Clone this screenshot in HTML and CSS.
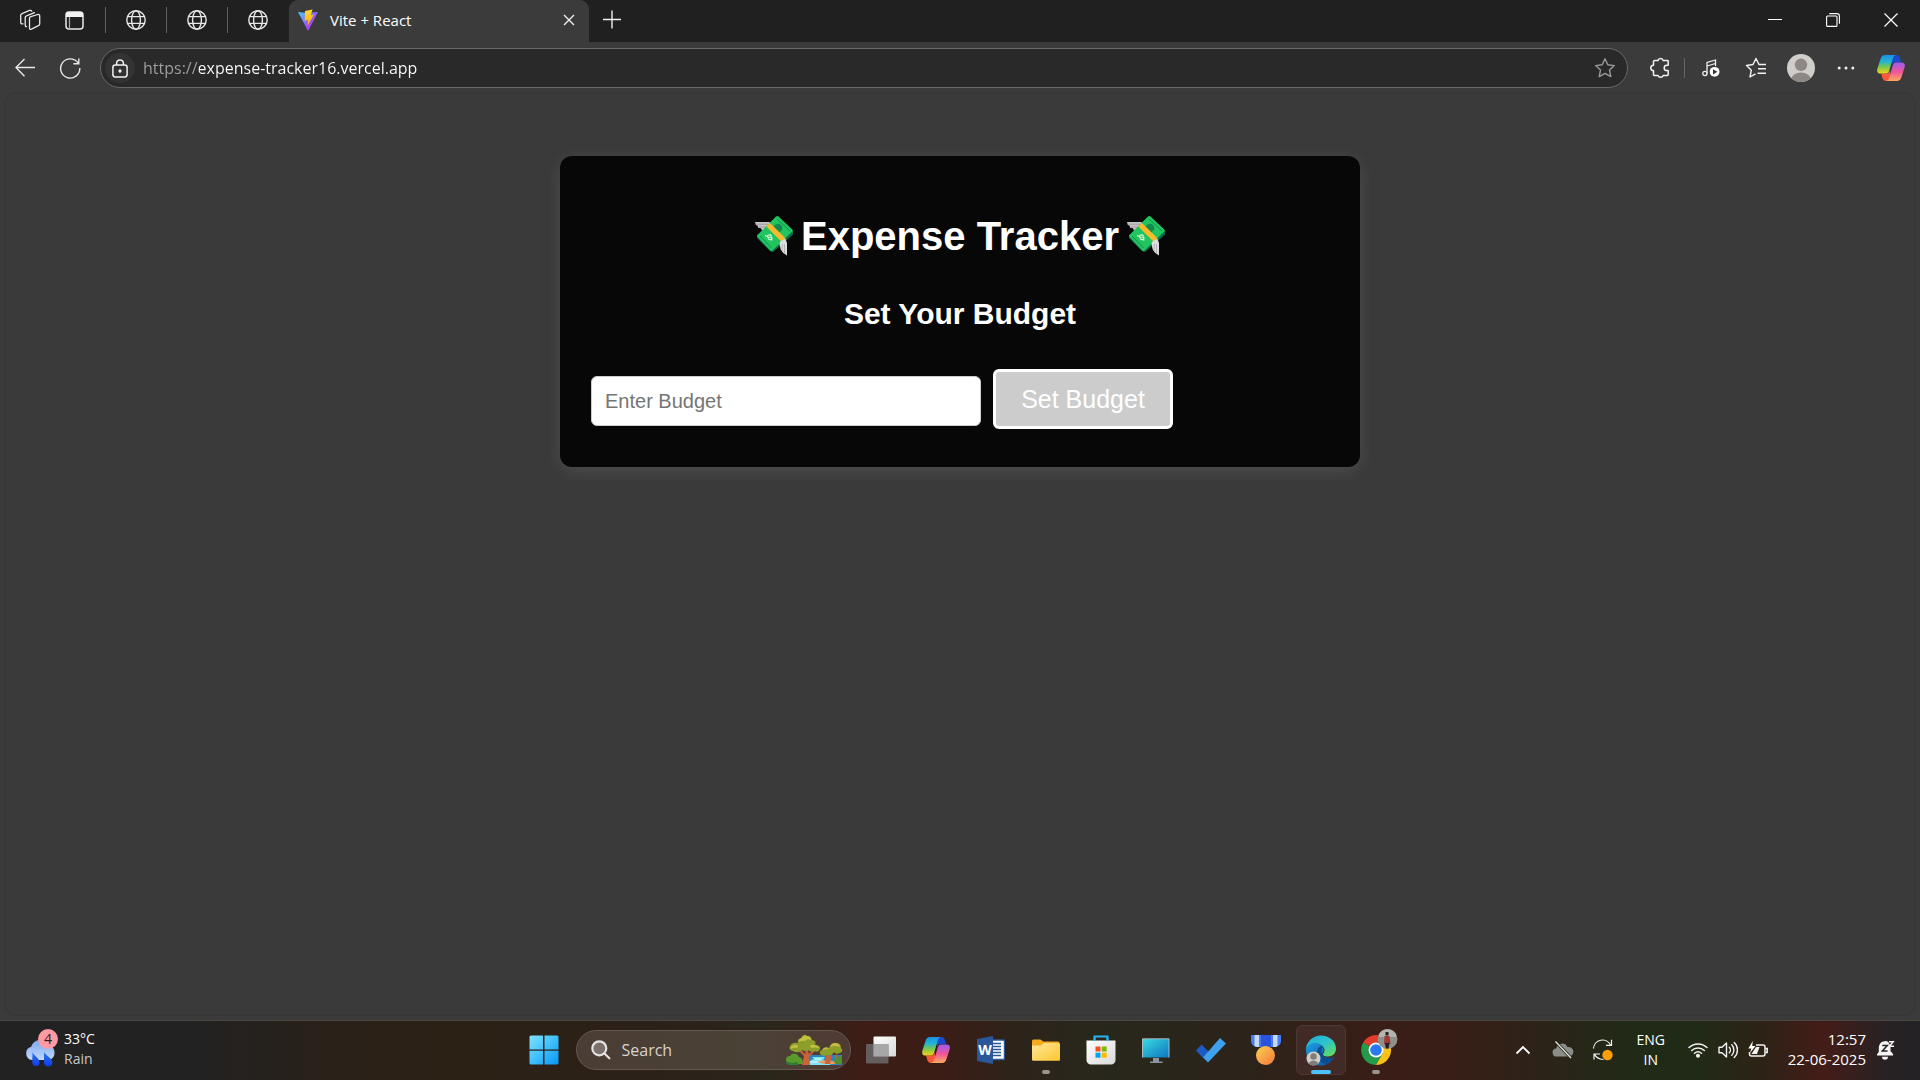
FILE: index.html
```html
<!DOCTYPE html>
<html lang="en">
<head>
<meta charset="utf-8">
<meta name="viewport" content="width=device-width, initial-scale=1">
<title>Vite + React</title>
<link rel="stylesheet" href="styles.css">
</head>
<body>
<!-- Shared gradients and reusable symbols -->
<svg class="defs" aria-hidden="true">
  <defs>
    <linearGradient id="vite-a" x1="0" y1="0" x2="1" y2="1"><stop offset="0" stop-color="#41d1ff"/><stop offset=".6" stop-color="#a34bfa"/><stop offset="1" stop-color="#bd34fe"/></linearGradient>
    <linearGradient id="vite-b" x1="0" y1="0" x2="0" y2="1"><stop offset="0" stop-color="#ffdd35"/><stop offset="1" stop-color="#ffa800"/></linearGradient>
    <linearGradient id="cop-a" x1="0" y1="0" x2="0" y2="1"><stop offset="0" stop-color="#1b8fe8"/><stop offset=".35" stop-color="#21b5d4"/><stop offset=".65" stop-color="#7cc84a"/><stop offset="1" stop-color="#f2d21c"/></linearGradient>
    <linearGradient id="cop-b" x1="0" y1="0" x2="0" y2="1"><stop offset="0" stop-color="#9a5cf2"/><stop offset=".5" stop-color="#ee5599"/><stop offset="1" stop-color="#ffa95c"/></linearGradient>
    <linearGradient id="win" x1="0" y1="0" x2="1" y2="1"><stop offset="0" stop-color="#83e1fd"/><stop offset=".5" stop-color="#3fc0fb"/><stop offset="1" stop-color="#0a93f8"/></linearGradient>
    <linearGradient id="fold" x1="0" y1="0" x2="1" y2="1"><stop offset="0" stop-color="#ffe79b"/><stop offset="1" stop-color="#fdc62f"/></linearGradient>
    <linearGradient id="screen" x1="0" y1="0" x2="1" y2="1"><stop offset="0" stop-color="#38dbe4"/><stop offset="1" stop-color="#0e74be"/></linearGradient>
    <linearGradient id="cloud" x1="0" y1="0" x2="0" y2="1"><stop offset="0" stop-color="#7aa9f0"/><stop offset="1" stop-color="#c3d9fb"/></linearGradient>
    <linearGradient id="drop" x1="0" y1="0" x2="0" y2="1"><stop offset="0" stop-color="#2a7de8"/><stop offset="1" stop-color="#1338f0"/></linearGradient>
    <linearGradient id="edge-a" x1="0" y1="0" x2="1" y2="1"><stop offset="0" stop-color="#25a9e0"/><stop offset=".5" stop-color="#2cc5c8"/><stop offset="1" stop-color="#6de04b"/></linearGradient>
    <linearGradient id="edge-b" x1="0" y1="0" x2="1" y2="1"><stop offset="0" stop-color="#1b9de2"/><stop offset="1" stop-color="#0c4f9e"/></linearGradient>
    <linearGradient id="medal" x1="0" y1="0" x2="1" y2="1"><stop offset="0" stop-color="#ffd04e"/><stop offset="1" stop-color="#f2793d"/></linearGradient>
    <linearGradient id="panes" x1="0" y1="0" x2="1" y2="1"><stop offset="0" stop-color="#ffffff"/><stop offset="1" stop-color="#d8d8d8"/></linearGradient>
    <symbol id="globe" viewBox="0 0 20 20"><g fill="none" stroke="#e8e8e8" stroke-width="1.4"><circle cx="10" cy="10" r="9.2"/><ellipse cx="10" cy="10" rx="4.4" ry="9.2"/><path d="M1.6 6.6h16.8M1.6 13.4h16.8"/></g></symbol>
    <symbol id="copilot" viewBox="0 0 28 26">
      <path d="M15 0h4.500c2 0 2.800 1.200 3.400 3l1.300 4h-5.500c-1.800 0-3.200 1.400-3.700 3z" fill="#1b49c9"/>
      <path d="M13 26H9c-2.200 0-3.200-1.500-3.800-3.500L4 18.500h5.300c2 0 3-1.300 3.700-3.500z" fill="#f4593a"/>
      <path d="M8 0h11.500c-2 0-3 1.300-3.700 3.500l-3.600 12c-.6 2-1.500 3-3.500 3H3.500C.7 18.500-.3 16.700.3 14L3.500 4C4.300 1.300 5.700 0 8 0z" fill="url(#cop-a)"/>
      <path d="M20 26H8.500c2 0 3-1.300 3.700-3.500l3.600-12c.6-2 1.500-3 3.500-3h5.200c2.800 0 3.800 1.800 3.200 4.500l-3.200 10c-.8 2.700-2.200 4-4.500 4z" fill="url(#cop-b)"/>
    </symbol>
    <symbol id="money" viewBox="0 0 38 40">
      <path d="M0 6h15l-3 8-5 .6-1-2.300-3-.5-.3-2L.8 9z" fill="#c9c5ca"/><path d="M1 8.200h12M4 11h8" stroke="#8f8b91" stroke-width=".7"/>
      <path d="M38 14.500v4L18 36l-3-1L2 22v-3z" fill="#0d6c49"/>
      <path d="M21 .6a1.800 1.800 0 0 1 2.500 0L37.300 13.500a1.500 1.500 0 0 1 0 2L17.500 34.600a1.600 1.600 0 0 1-2.300 0L2.600 21a1.500 1.500 0 0 1 0-2.200z" fill="#20c55f"/>
      <path d="M22.200 3.200 35 15M5 20l11.500 12" stroke="#12904b" fill="none"/>
      <circle cx="23" cy="12" r="4.300" fill="#138a4b"/>
      <path d="M16.600 20.200c-1.500-2.100-4.500-1.200-4 .6.500 1.700 3.800-.8 4.400 1 .4 1.700-2.500 2.800-4.200.6m-2.700-3.200 1.600 1.300m3.900 2.500 1.700 1.400" stroke="#dcf6d8" stroke-width="1.200" fill="none"/>
      <path d="m11.300 10.500 3.600-3.600 15.300 15-3.900 3.700z" fill="#fcb92c"/>
      <path d="M24.500 28c0-2.800 2.500-3.600 5.800-5.600L32 27v12.500l-4-2.800-2.300-3.200z" fill="#dedbe0"/><path d="M27.200 28v7M29.500 28v9" stroke="#a9a5ab" stroke-width=".8"/>
    </symbol>
  </defs>
</svg>

<header class="browser">
  <div class="tabstrip">
    <button class="icon-btn" aria-label="Workspaces"><svg width="22" height="22" viewBox="0 0 22 22" fill="none" stroke="#e8e8e8" stroke-width="1.300" stroke-linejoin="round" stroke-linecap="round"><path d="M10.500 9.200a2 2 0 0 1 1.300-1.500l7-2.200q1.900-.3 1.900 1.300v8.200a2 2 0 0 1-1.300 1.700l-6.900 3.500q-2 .6-2-1.300zM7.600 17.600q-1.400.1-1.400-1.500V8.300a2 2 0 0 1 1.300-1.500l8-3.100M4 14.800q-2.300.4-2.300-1.300V6.200A2 2 0 0 1 3 4.600l7.500-3.200q1.800-.4 2.300.8"/></svg></button>
    <button class="icon-btn" aria-label="Tab actions"><svg width="19" height="19" viewBox="0 0 19 19"><rect x="1" y="1" width="17" height="17" rx="3" fill="none" stroke="#e8e8e8" stroke-width="1.500"/><path d="M1 6V4a3 3 0 0 1 3-3h11a3 3 0 0 1 3 3v2z" fill="#f2f2f2"/><path d="M4.500 6v12" stroke="#aaa" stroke-width="1.200"/></svg></button>
    <button class="pinned" aria-label="Pinned tab 1"><svg width="20" height="20"><use href="#globe"/></svg></button>
    <button class="pinned" aria-label="Pinned tab 2"><svg width="20" height="20"><use href="#globe"/></svg></button>
    <button class="pinned" aria-label="Pinned tab 3"><svg width="20" height="20"><use href="#globe"/></svg></button>
    <div class="tab">
      <svg width="20" height="22" viewBox="0 0 20 22"><path d="M0 3 8.500 4l11.500-1L10 22z" fill="url(#vite-a)"/><path d="m7 2 7.500-1.500-1.800 5.800 3-.6L9.500 17l.6-6-3.400.8z" fill="url(#vite-b)"/></svg>
      <span class="tab-title">Vite + React</span>
      <button class="icon-btn tab-close" aria-label="Close tab"><svg width="12" height="12" viewBox="0 0 12 12" stroke="#eee" stroke-width="1.400"><path d="m1 1 10 10M11 1 1 11"/></svg></button>
    </div>
    <button class="icon-btn new-tab" aria-label="New tab"><svg width="18" height="20" viewBox="0 0 18 20" stroke="#eee" stroke-width="1.400"><path d="M0 9.500h18M9 .5v18"/></svg></button>
    <div class="window-controls">
      <button class="icon-btn" aria-label="Minimize"><svg width="14" height="14" viewBox="0 0 14 14" stroke="#fff"><path d="M0 6.500h14"/></svg></button>
      <button class="icon-btn" aria-label="Restore"><svg width="14" height="14" viewBox="0 0 14 14" fill="none" stroke="#fff" stroke-width="1.100"><rect x=".6" y="3" width="10.400" height="10.400" rx="1"/><path d="M3.300.6H11a2.400 2.400 0 0 1 2.400 2.400v7.700"/></svg></button>
      <button class="icon-btn" aria-label="Close"><svg width="14" height="14" viewBox="0 0 14 14" stroke="#fff" stroke-width="1.200"><path d="m.5.5 13 13M13.500.5l-13 13"/></svg></button>
    </div>
  </div>

  <div class="toolbar">
    <button class="icon-btn" aria-label="Back"><svg width="22" height="20" viewBox="0 0 22 20" fill="none" stroke="#e8e8e8" stroke-width="1.400"><path d="M21 9.500H2M10.500 1 2 9.500l8.500 8.800"/></svg></button>
    <button class="icon-btn" aria-label="Refresh"><svg width="22" height="22" viewBox="0 0 22 22" fill="none" stroke="#e8e8e8" stroke-width="1.400"><path d="M19.500 6.600A9.600 9.600 0 1 0 20.800 11M19.800 1.500v5.200h-5.400"/></svg></button>
    <div class="address">
      <button class="site-info" aria-label="Site information"><svg width="16" height="19" viewBox="0 0 16 19" fill="none" stroke="#f2f2f2" stroke-width="1.500"><rect x=".9" y="5.900" width="14.200" height="12" rx="2.400"/><path d="M4.600 6V4.300a3.400 3.400 0 0 1 6.800 0V6"/><circle cx="8" cy="12" r=".9" fill="#fff"/></svg></button>
      <input class="url" type="text" aria-label="Address" value="https://expense-tracker16.vercel.app">
      <button class="icon-btn" aria-label="Add to favorites"><svg width="22" height="22" viewBox="0 0 22 22" fill="none" stroke="#9a9a9a" stroke-width="1.400" stroke-linejoin="round"><path d="m11 1.800 2.800 6 6.500.8-4.800 4.500 1.300 6.500-5.800-3.200-5.800 3.200 1.300-6.500L1.700 8.600l6.500-.8z"/></svg></button>
    </div>
    <div class="tools">
      <button class="icon-btn" aria-label="Extensions"><svg width="20" height="22" viewBox="0 0 20 22" fill="none" stroke="#f2f2f2" stroke-width="1.500" stroke-linejoin="round"><path d="M4.500 3.500H8a2.700 2.700 0 0 1 5.200 0h4.300q.7 0 .7.700v4h-1.300a2.600 2.600 0 0 0 0 5.400h1.300v4q0 .8-.8.800h-4.200a2.700 2.700 0 0 1-5.200 0H4.300q-.8 0-.8-.8v-4a2.700 2.700 0 0 1 0-5.400V4.500q0-1 1-1z"/></svg></button>
      <span class="divider"></span>
      <button class="icon-btn" aria-label="Media"><svg width="18" height="20" viewBox="0 0 18 20" fill="none" stroke="#f2f2f2" stroke-width="1.300"><circle cx="2.900" cy="15.500" r="2.100"/><path d="M5 15.500V4.500L13.500 2v6M5 8l8.500-2.500"/><circle cx="12.600" cy="13.800" r="4.900" fill="#fff" stroke="none"/><path d="m11 11.200 4.300 2.600-4.300 2.600z" fill="#333" stroke="none"/></svg></button>
      <button class="icon-btn" aria-label="Favorites"><svg width="22" height="22" viewBox="0 0 22 22" fill="none" stroke="#f2f2f2" stroke-width="1.400" stroke-linejoin="round"><path d="M21 7.500h-7L11 1.500l-3 6-6.500 1 4.800 4.700L5 20l5.500-3.200M13 11.800h8M12.500 16.200H21"/></svg></button>
      <button class="icon-btn" aria-label="Profile"><svg width="28" height="28" viewBox="0 0 28 28"><clipPath id="av"><circle cx="14" cy="14" r="14"/></clipPath><g clip-path="url(#av)"><rect width="28" height="28" fill="#d0cecb"/><circle cx="14" cy="10.800" r="6.200" fill="#8d8884"/><ellipse cx="14" cy="26" rx="10" ry="7.500" fill="#8d8884"/></g></svg></button>
      <button class="icon-btn" aria-label="Settings and more"><svg width="18" height="6" viewBox="0 0 18 6" fill="#f2f2f2"><circle cx="2.200" cy="3" r="1.500"/><circle cx="9" cy="3" r="1.500"/><circle cx="15.800" cy="3" r="1.500"/></svg></button>
      <button class="icon-btn" aria-label="Copilot"><svg width="28" height="26"><use href="#copilot"/></svg></button>
    </div>
  </div>
</header>

<main class="page">
  <section class="card">
    <h1><svg width="38" height="40" aria-hidden="true"><use href="#money"/></svg><span>Expense Tracker</span><svg width="38" height="40" aria-hidden="true"><use href="#money"/></svg></h1>
    <h2>Set Your Budget</h2>
    <form class="budget">
      <input type="text" placeholder="Enter Budget" aria-label="Enter Budget">
      <button type="submit" disabled>Set Budget</button>
    </form>
  </section>
</main>

<footer class="taskbar">
  <button class="weather">
    <svg width="34" height="40" viewBox="0 0 34 40"><path d="M8 31a6.800 6.800 0 0 1-.8-13.300A9.500 9.500 0 0 1 25 16.500 7.500 7.500 0 0 1 25 31z" fill="url(#cloud)"/><path d="M8.500 23c1 3.500 7 6 7 10.500a3.600 3.600 0 0 1-7.200 0zM20 22.500c1 4 8.500 6.500 8.500 11a4.300 4.300 0 0 1-8.500.5z" fill="url(#drop)"/><circle cx="24" cy="10" r="10" fill="#ff99a4"/><text x="24" y="15" class="badge-text">4</text></svg>
    <span class="stack"><span>33°C</span><span class="dim">Rain</span></span>
  </button>

  <nav class="apps" aria-label="Taskbar">
    <button class="app" aria-label="Start"><svg width="30" height="30" viewBox="0 0 30 30" fill="url(#win)"><path d="M.5 2Q.5.500 2 .500h12v14H.5zM15.500.500H28q1.500 0 1.500 1.500v12.500h-14zM.5 15.700h13.500v13.800H2Q.5 29.500.5 28zM15.500 15.700h14V28q0 1.500-1.500 1.500H15.500z"/></svg></button>
    <label class="search">
      <svg width="20" height="20" viewBox="0 0 20 20" fill="none" stroke="#e6e2df" stroke-width="2.200" stroke-linecap="round"><circle cx="8.300" cy="8.300" r="7" fill="#7a716c"/><path d="m13.500 13.500 4.800 4.800"/></svg>
      <input type="search" placeholder="Search" aria-label="Search">
      <svg width="57" height="32" viewBox="0 0 57 32"><path d="M18 21h38v10H18z" fill="#2d84b8"/><path d="M22 31q1-5 6-6l-2-2h13l-2 3q4 2 8 5z" fill="#7fe3f4"/><path d="M24 28h10M29 25h6" stroke="#dffaff"/><path d="M31 28q8-3 16-1l6 3H38z" fill="#e79a62"/><path d="M0 26a4 4 0 0 1 4-4 5 5 0 0 1 9 1q4 1 4 7H4q-4 0-4-4z" fill="#5b9a2b"/><path d="M0 27q5 3 11 1l2 3H3q-3-1-3-4z" fill="#2e7d36"/><path d="m16 31 2-9-6-6h3l4 4 2-8 2 8 6-5h2l-8 8 1 8zM39 30l1-8-3-3 4 2 3 1 1-4 1 1-2 11zM49 29l1-11 2 11z" fill="#c8633a"/><path d="M12 9q-1-4 3-5 2-5 6-2 4 0 5 4 5 1 3 5 6 0 5 4-1 4-6 2-3 2-6-1-3 2-6 0-4 4-9 1-5-1-3-5 2-4 8-3z" fill="#8e9e2b"/><path d="M13 8q-1-3 3-4 2-4 5-2 4 0 4 4-4-2-6 1-3-1-6 1zM5 13q2-3 6-2 2 1 0 3-4-1-7 1zM24 11q7-1 9 3-5-1-8 0z" fill="#c3c23f"/><path d="M36 16q3-5 7-2 2-6 7-5 5 0 5 5 3 3-1 5-4 2-6-1-2 4-6 3-5 2-8-1-1-3 2-4z" fill="#8e9e2b"/><path d="M44 13q2-4 6-4 4 1 4 4-5-2-10 0zM36 16q3-4 7-1-4 0-7 1z" fill="#c9b945"/><path d="M49 30q-2-5 2-6 3-4 5 0v6z" fill="#4d922f"/></svg>
    </label>
    <button class="app" aria-label="Task view"><svg width="30" height="28" viewBox="0 0 30 28"><rect x="7.500" y=".5" width="22.500" height="20" rx="1" fill="url(#panes)"/><rect x="0" y="8" width="22.500" height="19.500" rx="1" fill="#6b6b6b" opacity=".85"/><path d="M7.500 8h15v12.500h-15z" fill="#a7a7a7"/></svg></button>
    <button class="app" aria-label="Copilot"><svg width="28" height="26"><use href="#copilot"/></svg></button>
    <button class="app" aria-label="Word"><svg width="28" height="28" viewBox="0 0 28 28"><path d="M14 4h12.500q1 0 1 1v17.500q0 1-1 1H14z" fill="#fff" stroke="#2b5797" stroke-width="1.400"/><path d="M16 7.500h8M16 10.500h8M16 13.500h8M16 16.500h8M16 19.500h8" stroke="#2b5797" stroke-width="1.400"/><path d="m0 3 16-3v28L0 25z" fill="#2b579a"/><text x="8" y="19" class="word-text">W</text></svg></button>
    <button class="app running" aria-label="File Explorer"><svg width="28" height="22" viewBox="0 0 28 22"><path d="M0 2Q0 .5 1.500.5H8q1.500 0 3 2H26q1.500 0 1.500 1.500v4H0z" fill="#f5ab1c"/><path d="M0 6.500h9L12 4h14.500Q28 4 28 5.500v15q0 1.200-1.200 1.200H1.200Q0 21.700 0 20.500z" fill="url(#fold)"/></svg></button>
    <button class="app" aria-label="Microsoft Store"><svg width="30" height="30" viewBox="0 0 30 30"><path d="M8.500 7V1.500h13V7" fill="none" stroke="#27b4ec" stroke-width="2"/><path d="M.5 5.500h29V25a4.500 4.500 0 0 1-4.500 4.500H5A4.500 4.500 0 0 1 .5 25z" fill="url(#panes)"/><path d="M8.500 3v3M21.500 3v3" stroke="#27b4ec" stroke-width="2"/><path d="M9.500 11.500h5v5h-5z" fill="#f25022"/><path d="M15.700 11.500h5v5h-5z" fill="#7fba00"/><path d="M9.500 17.700h5v5h-5z" fill="#00a4ef"/><path d="M15.700 17.700h5v5h-5z" fill="#ffb900"/></svg></button>
    <button class="app" aria-label="This PC"><svg width="28" height="25" viewBox="0 0 28 25"><path d="M11 20h6v3.500h3.500V25H8v-1.500h3z" fill="#8c959d"/><path d="M.5 1h26.500v18.500H.5z" fill="url(#screen)"/><path d="M.5 19.500V.800h26.500v18.700" stroke="#a7bac0" fill="none"/></svg></button>
    <button class="app" aria-label="To Do"><svg width="30" height="26" viewBox="0 0 30 26"><path d="M0 13.500 5.500 7.500l7.500 7.500-6 6z" fill="#1d5bc4"/><path d="M7 20.500 24 1l6 5.500L12 25.500z" fill="#3fa0ee"/></svg></button>
    <button class="app" aria-label="Rewards"><svg width="30" height="30" viewBox="0 0 30 30"><path d="M0 0h30v6q0 5-6 6H6Q0 11 0 6z" fill="#4a7bf2"/><path d="M10 0h10v12H10z" fill="#2b54dd"/><path d="M3.500 0H8v12H5l-1.500-1zM22 0h4.500v11l-1.500 1h-3z" fill="#c3dbfb"/><circle cx="14.500" cy="20.500" r="9.500" fill="url(#medal)"/></svg></button>
    <button class="app running active" aria-label="Microsoft Edge"><svg width="30" height="31" viewBox="0 0 30 31"><path d="M0 15C0 7 6.500.500 15 .500c8 0 15 5.500 15 13 0 5-3.500 8-8 8-4 0-5.500-1.500-5-2.500 2-2 2.500-6.500-2-9C10 7.500 3 9 0 15z" fill="url(#edge-a)"/><path d="M0 15c1-5 6-7.500 10.500-7 5 .6 8 5 6.500 9-1 3-1.500 2 0 4 2 3 7 3.500 11 1C24 30 16 31.500 11 30 4 28 0 22 0 15z" fill="url(#edge-b)"/><path d="M17 11q-6 0-6 7 0 8 9 11.500 5-2 8-7.500-5 2-9.500-.5Q13 18 17 11z" fill="#0b4c91"/><circle cx="7.500" cy="23.500" r="7" fill="#cfcdca"/><circle cx="7.500" cy="21.500" r="3.200" fill="#817c78"/><path d="M2.500 28q5-5 10 0-5 5-10 0z" fill="#817c78"/></svg></button>
    <button class="app running" aria-label="Google Chrome"><svg class="badged" width="30" height="30" viewBox="0 7 30 30"><path d="M15 22 2.100 14.500A15 15 0 0 1 28 14.500H15z" fill="#e33b2e"/><path d="M15 22 2.100 14.500A15 15 0 0 0 15 37l7-11z" fill="#249b48"/><path d="M28 14.500A15 15 0 0 1 15 37l7-12-4-10.500z" fill="#fbc116"/><circle cx="15" cy="22" r="7.500" fill="#fff"/><circle cx="15" cy="22" r="5.800" fill="#2a78f0"/><circle cx="26.500" cy="11" r="10" fill="#918f8a"/><path d="M18 6a10 10 0 0 1 17 0v3H18z" fill="#b3b4ae"/><path d="M23.500 8h5l1 8h-6.500z" fill="#9d3a35"/><path d="M24.500 4h3v3.500h-3zM24 15h4.500l-1 5.500h-2.700z" fill="#26211f"/></svg></button>
  </nav>

  <div class="tray">
    <button class="tray-btn" aria-label="Show hidden icons"><svg width="16" height="10" viewBox="0 0 16 10" fill="none" stroke="#fff" stroke-width="1.800"><path d="m1.500 8.500 6.500-6.500 6.500 6.500"/></svg></button>
    <button class="tray-btn" aria-label="OneDrive"><svg width="22" height="18" viewBox="0 0 22 18"><path d="M5 15.500a4 4 0 0 1-.8-8A6 6 0 0 1 15.500 6a4.800 4.800 0 0 1 2 9.500z" fill="#8b8d88"/><path d="m3.500.5 15.500 16.500" stroke="#222a18" stroke-width="3"/><path d="m3.500.5 15.500 16.500" stroke="#ddd" stroke-width="1.400"/></svg></button>
    <button class="tray-btn" aria-label="Windows Update"><svg width="22" height="22" viewBox="0 0 22 22" fill="none" stroke="#f2f2f2" stroke-width="1.200"><path d="M1.500 9.500A9 9 0 0 1 18.500 6M19.500.8v5.500h-5.500M2 20.500V15h6M2.500 15q2 5 9 5.500"/><circle cx="15.500" cy="16" r="5.200" fill="#ff9d0a" stroke="none"/></svg></button>
    <button class="lang stack"><span>ENG</span><span>IN</span></button>
    <button class="status" aria-label="Network, volume and battery">
      <svg width="20" height="16" viewBox="0 0 20 16" fill="none" stroke="#f2f2f2" stroke-width="1.500" stroke-linecap="round"><path d="M1 5.500a13 13 0 0 1 18 0M3.700 8.500a9.200 9.200 0 0 1 12.600 0M6.500 11.300a5.300 5.300 0 0 1 7 0"/><circle cx="10" cy="13.800" r="1.300" fill="#fff"/></svg>
      <svg width="20" height="18" viewBox="0 0 20 18" fill="none" stroke="#f2f2f2" stroke-width="1.400" stroke-linejoin="round" stroke-linecap="round"><path d="M1 6.300h3L8.500 2v14L4 11.800H1zM11.300 6.200a4 4 0 0 1 0 5.600M13.800 3.800a7.500 7.500 0 0 1 0 10.400M16.300 1.500a10.500 10.500 0 0 1 0 15"/></svg>
      <svg width="20" height="18" viewBox="0 0 20 18" fill="none" stroke="#f2f2f2" stroke-width="1.500"><path d="M8 4h7q2 0 2 2v7q0 2-2 2H3.500q-2 0-2-2v-2"/><path d="M17.500 7.500h1.700v4h-1.700"/><path d="M3.500 13h5.500L11.500 6H8z" fill="#f2f2f2" stroke="none"/><path d="M4.800 0 .3 7.500h3L2 12l5.500-7H4.200z" fill="#fff" stroke="none"/></svg>
    </button>
    <button class="clock stack"><span>12:57</span><span>22-06-2025</span></button>
    <button class="tray-btn" aria-label="Notifications"><svg width="18" height="20" viewBox="0 0 18 20"><path d="M0 15.500v-1.200L1.800 12V7.500A6.500 6.500 0 0 1 11 1.700l2.500 4v5.800L14.500 12l1.600 2.300v1.200zM5 16.800h6a3 3 0 0 1-6 0z" fill="#f5f5f5"/><path d="M5.300 5.500h5l-5 5.500h5.200" stroke="#222" stroke-width="1.500" fill="none"/><path d="M12 1.700h4.200L12.500 6.200h4.500" stroke="#f5f5f5" stroke-width="1.400" fill="none"/></svg></button>
  </div>
</footer>
</body>
</html>
```
FILE: styles.css
```css
* {
  box-sizing: border-box;
}

body {
  margin: 0;
  min-height: 100vh;
  display: flex;
  flex-direction: column;
  background: #3b3b3b;
  color: #fff;
  font-family: "Open Sans", "Noto Sans", sans-serif;
  font-size: 14px;
}

.defs {
  position: absolute;
  width: 0;
  height: 0;
}

svg {
  display: block;
  flex: none;
}

button {
  padding: 0;
  border: 0;
  background: none;
  color: inherit;
  font: inherit;
}

.icon-btn {
  display: grid;
  place-items: center;
}

/* Tab strip */
.tabstrip {
  display: flex;
  align-items: center;
  height: 42px;
  padding: 0 0 2px 7px;
  background: #202020;
}

.tabstrip > .icon-btn {
  width: 45px;
  height: 40px;
}

.pinned {
  display: grid;
  place-items: center;
  width: 61px;
  height: 26px;
  border-left: 1px solid #606060;
}

.pinned:nth-of-type(3) {
  margin-left: 8px;
}

.tab {
  display: flex;
  align-items: center;
  align-self: flex-start;
  gap: 12px;
  width: 300px;
  height: 42px;
  margin-left: 1px;
  padding: 0 14px 2px 9px;
  border-radius: 9px 9px 0 0;
  background: #3b3b3b;
}

.tab-title {
  flex: 1;
  font-size: 15px;
}

.new-tab {
  margin-right: auto;
}

.window-controls {
  display: flex;
}

.window-controls .icon-btn {
  width: 58px;
  height: 42px;
}

/* Toolbar */
.toolbar {
  display: flex;
  align-items: center;
  height: 50px;
  padding: 2px 7px 0 2px;
}

.toolbar > .icon-btn {
  width: 45px;
  height: 40px;
}

.address {
  flex: 1;
  display: flex;
  align-items: center;
  height: 40px;
  margin-left: 8px;
  padding: 0 11px 0 4px;
  border: 1px solid #686868;
  border-radius: 20px;
  background: #292929;
}

.site-info {
  display: grid;
  place-items: center;
  width: 30px;
  height: 30px;
  border-radius: 50%;
  background: #333;
}

.url {
  flex: 1;
  min-width: 0;
  padding: 0 8px;
  border: 0;
  outline: 0;
  background: linear-gradient(90deg, #a0a0a0 64px, #fff 64px);
  background-clip: text;
  -webkit-background-clip: text;
  color: transparent;
  font: inherit;
  font-size: 16px;
}

.tools {
  display: flex;
  align-items: center;
  margin-left: 9px;
}

.tools .icon-btn {
  width: 45px;
  height: 40px;
}

.divider {
  width: 1px;
  height: 20px;
  margin: 0 3px 0 2px;
  background: #666;
}

/* Page */
.page {
  flex: 1;
  margin: 0 4px 4px;
  padding: 63px 16px;
  border: 1px solid #363636;
  border-radius: 12px;
  background: #3a3a3a;
  font-family: "Liberation Sans", Arial, sans-serif;
}

.card {
  max-width: 800px;
  margin: 0 auto;
  padding: 57px 31px 38px;
  border-radius: 12px;
  background: #070707;
  box-shadow: 0 4px 16px rgba(255, 255, 255, 0.1);
}

h1 {
  display: flex;
  justify-content: center;
  align-items: center;
  gap: 8px;
  margin: 0 0 38px;
  font-size: 40px;
  line-height: 46px;
}

h2 {
  margin: 0 0 38px;
  font-size: 30px;
  line-height: 34px;
  text-align: center;
}

.budget {
  display: flex;
  align-items: baseline;
  gap: 12px;
}

.budget input {
  width: 390px;
  height: 50px;
  min-width: 0;
  padding: 0 13px;
  border: 1px solid #ccc;
  border-radius: 6px;
  background: #fff;
  font: inherit;
  font-size: 20px;
}

.budget input::placeholder {
  color: #757575;
}

.budget button {
  width: 180px;
  height: 60px;
  border: 3px solid #fff;
  border-radius: 6px;
  background: #ccc;
  color: #fff;
  font-size: 25px;
}

/* Taskbar */
.taskbar {
  display: grid;
  grid-template-columns: 1fr auto 1fr;
  align-items: center;
  height: 60px;
  box-shadow: inset 0 1px #4a4640;
  background: linear-gradient(90deg, #222 0, #222 10%, #2a2119 17%, #2b2115 24%, #2c2119 34%, #2a261b 40%, #3d1d16 45%, #3b1d16 49%, #2c241a 53%, #28271c 58%, #2c231a 65%, #3a1d17 72%, #371e17 76%, #2a2418 81%, #202a17 85%, #202b17 88%, #2e2216 92%, #441c18 95%, #2a2123 98%, #222226 100%);
}

.weather {
  display: flex;
  align-items: center;
  justify-self: start;
  gap: 6px;
  padding: 0 0 2px 24px;
}

.badge-text {
  fill: #222;
  font-size: 14px;
  text-anchor: middle;
}

.word-text {
  fill: #fff;
  font-size: 14px;
  font-weight: 700;
  text-anchor: middle;
}

.stack {
  display: flex;
  flex-direction: column;
  line-height: 20px;
  text-align: left;
}

.dim {
  color: #c8c8c8;
}

.apps {
  display: flex;
  align-items: center;
}

.app {
  position: relative;
  display: grid;
  place-items: center;
  width: 55px;
  height: 50px;
}

.badged {
  overflow: visible;
}

.running::after {
  content: "";
  position: absolute;
  bottom: 1px;
  left: calc(50% - 4px);
  width: 8px;
  height: 4px;
  border-radius: 2px;
  background: #9a9390;
}

.active {
  width: 50px;
  margin: 0 3px 0 2px;
  border: 1px solid #4c3833;
  border-radius: 6px;
  background: #422b27;
}

.active::after {
  bottom: 0;
  left: calc(50% - 10px);
  width: 20px;
  background: #4cc2ff;
}

.search {
  display: flex;
  align-items: center;
  gap: 11px;
  width: 275px;
  height: 40px;
  margin: 0 3px 0 4px;
  padding: 0 7px 0 14px;
  border: 1px solid #655850;
  border-radius: 20px;
  background: linear-gradient(90deg, #4a3d35, #4a4236 65%, #513a34);
}

.search input {
  flex: 1;
  min-width: 0;
  padding: 0;
  border: 0;
  outline: 0;
  background: none;
  color: #fff;
  font: inherit;
  font-size: 16px;
}

.search input::placeholder {
  color: #d8d2ce;
}

.tray {
  display: flex;
  align-items: center;
  justify-self: end;
  padding-right: 14px;
}

.tray-btn {
  display: grid;
  place-items: center;
  width: 40px;
  height: 40px;
}

.lang {
  width: 56px;
  text-align: center;
}

.status {
  display: flex;
  align-items: center;
  gap: 10px;
  padding: 0 20px 0 9px;
}

.clock {
  padding-bottom: 2px;
  font-size: 15px;
  text-align: right;
}
```
